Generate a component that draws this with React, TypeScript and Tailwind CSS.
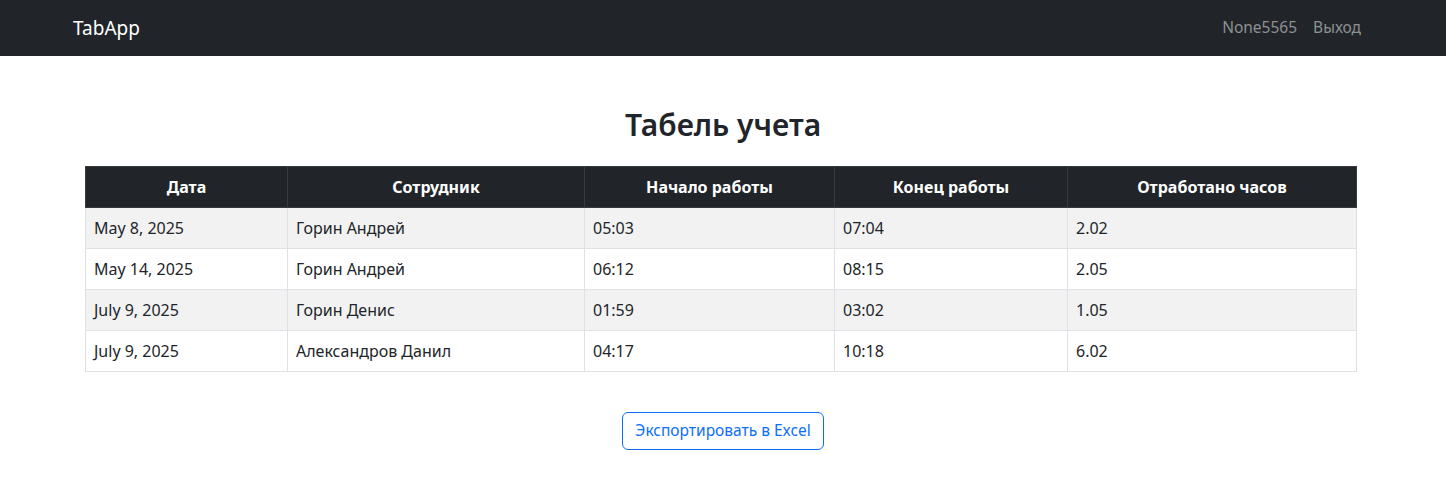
import React from 'react';

const rows = [
  { date: 'May 8, 2025', name: 'Горин Андрей', start: '05:03', end: '07:04', hours: '2.02' },
  { date: 'May 14, 2025', name: 'Горин Андрей', start: '06:12', end: '08:15', hours: '2.05' },
  { date: 'July 9, 2025', name: 'Горин Денис', start: '01:59', end: '03:02', hours: '1.05' },
  { date: 'July 9, 2025', name: 'Александров Данил', start: '04:17', end: '10:18', hours: '6.02' },
];

const headers = ['Дата', 'Сотрудник', 'Начало работы', 'Конец работы', 'Отработано часов'];
const widths = ['w-[202px]', 'w-[297px]', 'w-[250px]', 'w-[233px]', 'w-[289px]'];

const App = () => {
  return (
    <div className="min-h-screen bg-white text-[#212529] font-['Segoe_UI','Noto_Sans','Open_Sans',sans-serif]">
      <nav className="h-14 bg-[#212529] flex items-center justify-between pl-[73px] pr-[85px]">
        <span className="text-[19px] text-white">TabApp</span>
        <div className="flex items-center gap-4 text-[15.5px] text-[#8e9193]">
          <span>None5565</span>
          <span>Выход</span>
        </div>
      </nav>

      <div className="px-[85px] pt-[50px]">
        <h2 className="text-center text-[30px] font-semibold leading-[38px] mb-[22px]">Табель учета</h2>

        <table className="w-[1271px] table-fixed border-collapse border border-[#dee2e6] text-[16px]">
          <colgroup>
            {widths.map((w, i) => (
              <col key={i} className={w} />
            ))}
          </colgroup>
          <thead>
            <tr className="h-[41px] bg-[#212529] text-white">
              {headers.map((h) => (
                <th key={h} className="border border-[#373b3e] px-2 font-bold text-center">
                  {h}
                </th>
              ))}
            </tr>
          </thead>
          <tbody>
            {rows.map((r, i) => (
              <tr key={i} className={i % 2 === 0 ? 'h-[41px] bg-[#f2f2f2]' : 'h-[41px] bg-white'}>
                <td className="border border-[#dee2e6] px-2">{r.date}</td>
                <td className="border border-[#dee2e6] px-2">{r.name}</td>
                <td className="border border-[#dee2e6] px-2">{r.start}</td>
                <td className="border border-[#dee2e6] px-2">{r.end}</td>
                <td className="border border-[#dee2e6] px-2">{r.hours}</td>
              </tr>
            ))}
          </tbody>
        </table>

        <div className="flex justify-center mt-[40px]">
          <button className="h-[38px] px-3 border border-[#0d6efd] text-[#0d6efd] rounded-md text-[15.5px]">
            Экспортировать в Excel
          </button>
        </div>
      </div>
    </div>
  );
};

export default App;
